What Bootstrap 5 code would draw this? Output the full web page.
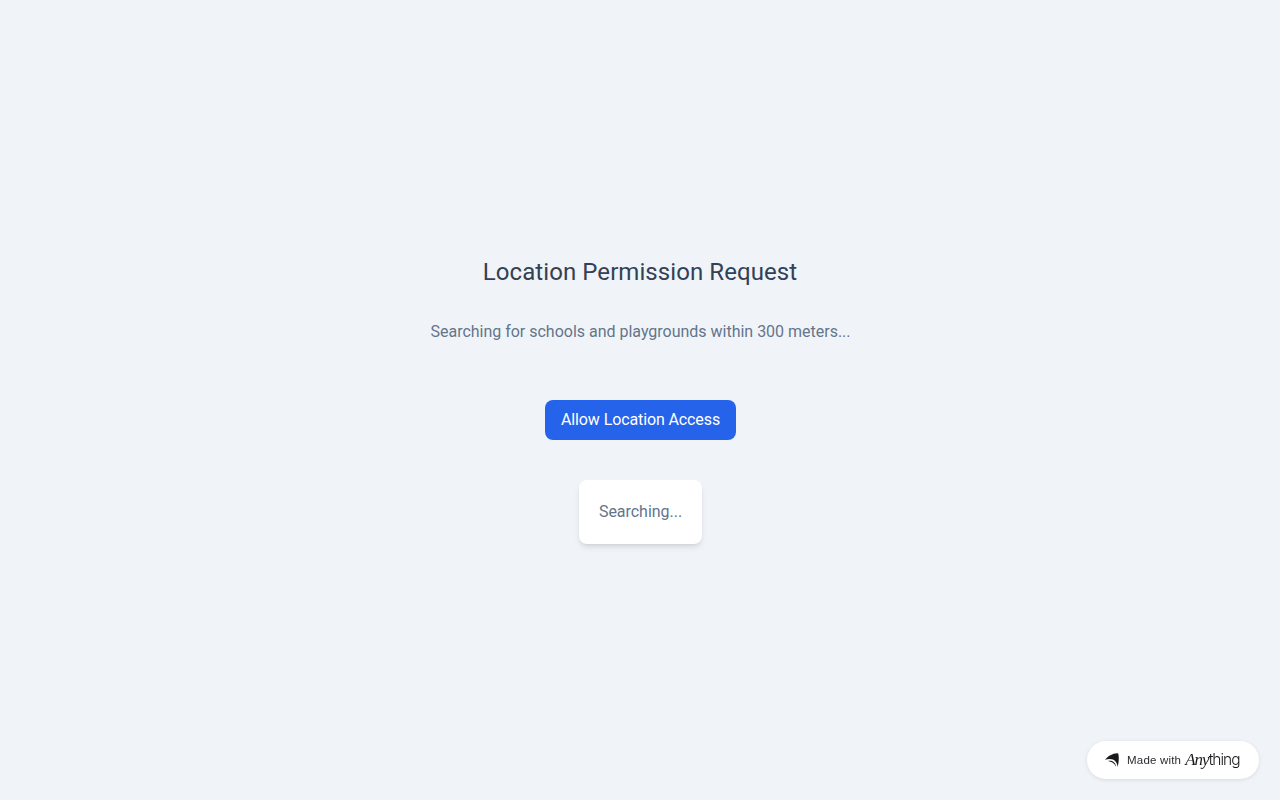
<!DOCTYPE html>
<html lang="en">
<head>
  <meta charset="UTF-8">
  <meta name="viewport" content="width=device-width, initial-scale=1.0">
  <title>Location Permission Request</title>
  <link
    href="https://cdn.jsdelivr.net/npm/bootstrap@5.3.0/dist/css/bootstrap.min.css"
    rel="stylesheet"
  />
  <style>
    body {
      background-color: #f0f4f8;
      color: #64748b;
      font-family: Roboto, "Liberation Sans", sans-serif;
    }
    .page-title {
      color: #334155;
      font-size: 24px;
      line-height: 32px;
      letter-spacing: .07px;
    }
    .search-message {
      margin: 32px 0 56px 1px;
      letter-spacing: -.01px;
    }
    .btn-location {
      --bs-btn-color: #fff;
      --bs-btn-bg: #2563eb;
      --bs-btn-hover-color: #fff;
      --bs-btn-hover-bg: #1d4ed8;
      --bs-btn-border-width: 0;
      --bs-btn-padding-x: 16px;
      --bs-btn-padding-y: 8px;
      --bs-btn-border-radius: 8px;
      margin-left: 1px;
      letter-spacing: -.11px;
    }
    .status-box {
      margin: 40px 0 0 1px;
      padding: 20px;
      border-radius: 8px;
      letter-spacing: -.03px;
      box-shadow: 0 4px 6px -1px rgba(0, 0, 0, .1), 0 2px 4px -2px rgba(0, 0, 0, .1);
    }
    .made-with {
      right: 21px;
      bottom: 21px;
      width: 172px;
      height: 38px;
      padding-left: 18px;
      color: #18191b;
      font: 11px Inter, "Liberation Sans", sans-serif;
      box-shadow: 0 1px 4px rgba(0, 0, 0, .1);
    }
    .made-with-label {
      color: #2b2c31;
      font: 11.500px "Liberation Sans", sans-serif;
      letter-spacing: .2px;
    }
    .brand-script {
      font: italic 17px "Liberation Serif", serif;
      letter-spacing: -1px;
    }
    .brand-sans {
      font-size: 15.500px;
      font-weight: 300;
      letter-spacing: -1px;
    }
  </style>
</head>
<body>
  <main class="min-vh-100 d-flex flex-column align-items-center justify-content-center text-center">
    <h1 class="page-title fw-normal mb-0">Location Permission Request</h1>
    <p class="search-message" id="message">Searching for schools and playgrounds within 300 meters...</p>
    <button type="button" class="btn btn-location">Allow Location Access</button>
    <div class="status-box bg-white" id="status">Searching...</div>
  </main>

  <a class="made-with position-fixed d-flex align-items-center bg-white rounded-pill text-decoration-none text-nowrap" href="#">
    <svg width="14" height="15" viewBox="0 0 14 15" fill="#18191b" aria-hidden="true">
      <path d="M0 6.800C3 3 7.500.3 12.200.2c.7 0 1 .3 1.200 1 .7 3.800.5 8.200-.8 12.800C12.200 8 8 4.300 0 6.800Z"/>
      <path d="M3 8c4-.8 7.200 1 8.200 5.700C9.200 10.500 7 8.600 3 8Z"/>
    </svg>
    <span class="made-with-label ms-2">Made with</span>
    <span class="ms-1"><span class="brand-script">Any</span><span class="brand-sans">thing</span></span>
  </a>
  <script src="https://cdn.jsdelivr.net/npm/bootstrap@5.3.0/dist/js/bootstrap.bundle.min.js"></script>
</body>
</html>
